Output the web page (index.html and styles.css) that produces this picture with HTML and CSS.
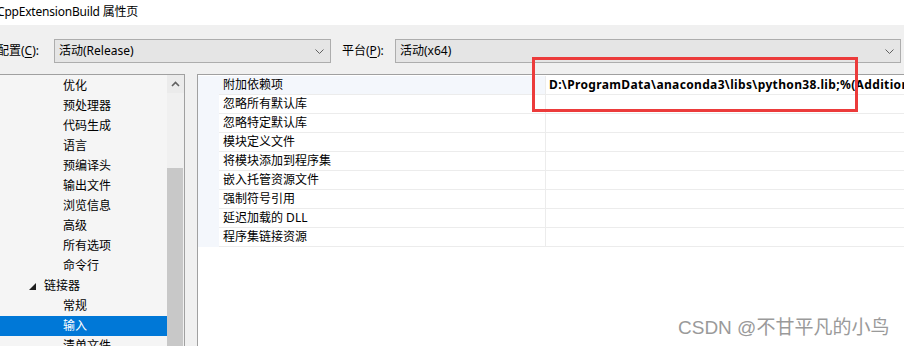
FILE: index.html
```html
<!DOCTYPE html>
<html lang="zh-CN">
<head>
<meta charset="utf-8">
<title>CppExtensionBuild 属性页</title>
<link rel="stylesheet" href="styles.css">
</head>
<body>
<div class="window">
  <div class="titlebar">CppExtensionBuild 属性页</div>
  <div class="toolbar">
    <span class="label label-config">配置(<u>C</u>):</span>
    <div class="combo combo-config">
      <span class="combo-text">活动(Release)</span>
      <svg class="chev" width="9" height="5" viewBox="0 0 9 5"><polyline points="0.5,0.5 4.5,4.5 8.5,0.5" fill="none" stroke="#606060" stroke-width="1"/></svg>
    </div>
    <span class="label label-platform">平台(<u>P</u>):</span>
    <div class="combo combo-platform">
      <span class="combo-text">活动(x64)</span>
      <svg class="chev" width="9" height="5" viewBox="0 0 9 5"><polyline points="0.5,0.5 4.5,4.5 8.5,0.5" fill="none" stroke="#606060" stroke-width="1"/></svg>
    </div>
  </div>
  <div class="main">
    <div class="tree">
      <div class="tree-list">
        <div class="node l2">优化</div>
        <div class="node l2">预处理器</div>
        <div class="node l2">代码生成</div>
        <div class="node l2">语言</div>
        <div class="node l2">预编译头</div>
        <div class="node l2">输出文件</div>
        <div class="node l2">浏览信息</div>
        <div class="node l2">高级</div>
        <div class="node l2">所有选项</div>
        <div class="node l2">命令行</div>
        <div class="node l1"><svg class="expander" width="7" height="7" viewBox="0 0 7 7"><polygon points="7,0 7,7 0,7" fill="#1e1e1e"/></svg><span>链接器</span></div>
        <div class="node l2">常规</div>
        <div class="node l2 selected">输入</div>
        <div class="node l2">清单文件</div>
      </div>
      <div class="scrollbar">
        <div class="sb-button">
          <svg width="9" height="6" viewBox="0 0 9 6"><polyline points="1,5 4.5,1.5 8,5" fill="none" stroke="#606060" stroke-width="1.6"/></svg>
        </div>
        <div class="sb-thumb"></div>
      </div>
    </div>
    <div class="grid">
      <div class="prop first"><div class="margin"></div><div class="name">附加依赖项</div><div class="value">D:\ProgramData\anaconda3\libs\python38.lib;%(AdditionalDependencies)</div></div>
      <div class="prop"><div class="margin"></div><div class="name">忽略所有默认库</div><div class="value"></div></div>
      <div class="prop"><div class="margin"></div><div class="name">忽略特定默认库</div><div class="value"></div></div>
      <div class="prop"><div class="margin"></div><div class="name">模块定义文件</div><div class="value"></div></div>
      <div class="prop"><div class="margin"></div><div class="name">将模块添加到程序集</div><div class="value"></div></div>
      <div class="prop"><div class="margin"></div><div class="name">嵌入托管资源文件</div><div class="value"></div></div>
      <div class="prop"><div class="margin"></div><div class="name">强制符号引用</div><div class="value"></div></div>
      <div class="prop"><div class="margin"></div><div class="name">延迟加载的 DLL</div><div class="value"></div></div>
      <div class="prop"><div class="margin"></div><div class="name">程序集链接资源</div><div class="value"></div></div>
    </div>
  </div>
  <div class="highlight"></div>
  <div class="watermark">CSDN @不甘平凡的小鸟</div>
</div>
</body>
</html>
```

FILE: styles.css
```css
* { box-sizing: border-box; }
html, body { margin: 0; padding: 0; }
body {
  background: #f0f0f0;
  font-family: "Noto Sans", "Noto Sans CJK SC", sans-serif;
  font-size: 12px;
  color: #000;
}
.window {
  position: relative;
  width: 904px;
  height: 346px;
  overflow: hidden;
}
.titlebar {
  height: 25px;
  line-height: 24px;
  background: #fff;
  margin-left: -3px;
  padding-left: 0;
  white-space: nowrap;
  letter-spacing: -0.2px;
}
.toolbar {
  height: 49px;
  display: flex;
  align-items: flex-start;
  padding-top: 14px;
}
.label {
  height: 24px;
  line-height: 24px;
  white-space: nowrap;
}
.label u { text-decoration-thickness: 1px; text-underline-offset: 2px; }
.label-config { width: 57px; margin-left: -3px; }
.label-platform { width: 53px; margin-left: 11px; }
.combo {
  height: 24px;
  background: #e5e5e5;
  border: 1px solid #adadad;
  display: flex;
  align-items: center;
  justify-content: space-between;
  padding: 0 6px 0 4px;
}
.combo-text { line-height: 22px; }
.combo-config { width: 277px; }
.combo-platform { width: 506px; }
.chev { display: block; }

.main {
  display: flex;
  height: 272px;
  gap: 12px;
}
.tree {
  width: 185px;
  display: flex;
  border-top: 1px solid #a0a0a0;
  border-right: 1px solid #a0a0a0;
}
.tree-list {
  width: 167px;
  background: #f5f5f5;
  padding-top: 1px;
}
.node {
  height: 20px;
  line-height: 20px;
  white-space: nowrap;
  display: flex;
  align-items: center;
}
.node.l2 { padding-left: 63px; }
.node.l1 { padding-left: 29px; }
.expander { margin-right: 8px; margin-top: 1px; }
.node.selected { background: #0078d7; color: #fff; }
.scrollbar {
  width: 17px;
  background: #f0f0f0;
  display: flex;
  flex-direction: column;
}
.sb-button {
  height: 18px;
  display: flex;
  align-items: center;
  justify-content: center;
  background: #ebebeb;
}
.sb-thumb {
  margin-top: 75px;
  width: 16px;
  flex: 1;
  background: #c8c8c8;
}
.grid {
  flex: 1;
  background: #fff;
  border-top: 1px solid #a0a0a0;
  border-left: 1px solid #a0a0a0;
  padding-top: 1px;
}
.prop {
  display: grid;
  grid-template-columns: 21px 327px 1fr;
  height: 19px;
}
.prop .margin { background: #f4f7fc; }
.prop .name {
  border-right: 1px solid #ececec;
  border-bottom: 1px solid #ececec;
  padding-left: 4px;
  line-height: 18px;
  white-space: nowrap;
}
.prop .value {
  border-bottom: 1px solid #ececec;
  padding-left: 3px;
  line-height: 18px;
  white-space: nowrap;
  overflow: hidden;
  font-weight: bold;
  letter-spacing: 0.35px;
}
.prop.first .name { background: #f4f7fc; }

.highlight {
  position: absolute;
  left: 532px;
  top: 57px;
  width: 326px;
  height: 55px;
  border: 3px solid #ec3b3b;
}
.watermark {
  position: absolute;
  left: 678px;
  top: 315px;
  font-family: "Liberation Sans", "Noto Sans CJK SC", sans-serif;
  font-size: 19px;
  line-height: 25px;
  color: #9a9a9a;
  text-shadow: 0 0 1px #fff;
  white-space: nowrap;
}
```
